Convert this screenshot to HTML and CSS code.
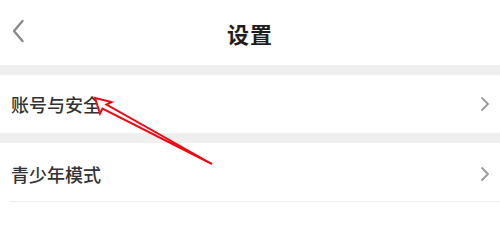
FILE: index.html
```html
<!DOCTYPE html>
<html lang="zh">
<head>
<meta charset="utf-8">
<link rel="stylesheet" href="styles.css">
</head>
<body>
<div class="page">
  <header class="topbar">
    <svg class="back" width="14" height="24" viewBox="0 0 14 24"><path d="M11.5 2 L3 12 L11.5 22" fill="none" stroke="#8a8a8a" stroke-width="2.4" stroke-linecap="round" stroke-linejoin="round"/></svg>
    <h1 class="title">设置</h1>
  </header>
  <div class="band"></div>
  <div class="row">
    <span class="label">账号与安全</span>
    <svg class="chev" width="10" height="16" viewBox="0 0 10 16"><path d="M2 2 L8 8 L2 14" fill="none" stroke="#9a9a9a" stroke-width="1.8" stroke-linecap="round" stroke-linejoin="round"/></svg>
  </div>
  <div class="band"></div>
  <div class="row row-last">
    <span class="label">青少年模式</span>
    <svg class="chev" width="10" height="16" viewBox="0 0 10 16"><path d="M2 2 L8 8 L2 14" fill="none" stroke="#9a9a9a" stroke-width="1.8" stroke-linecap="round" stroke-linejoin="round"/></svg>
  </div>
  <svg class="annot" width="500" height="214" viewBox="0 0 500 214">
    <polygon points="95,98 111.5,102 106.5,104.5 212,164 102.5,108.5 100,113.5" fill="#fff" stroke="#ee0a14" stroke-width="2" stroke-linejoin="miter"/>
  </svg>
</div>
</body>
</html>
```
FILE: styles.css
```css
html, body {
  margin: 0;
  padding: 0;
  background: #fff;
}
.page {
  position: relative;
  width: 500px;
  height: 214px;
  overflow: hidden;
  font-family: "Noto Sans CJK SC", "Noto Sans", sans-serif;
}
.topbar {
  height: 65px;
  display: flex;
  align-items: center;
  justify-content: center;
  position: relative;
}
.back {
  position: absolute;
  left: 11px;
  top: 19px;
}
.title {
  margin: 0;
  font-size: 22px;
  font-weight: 700;
  color: #1e1e1e;
  letter-spacing: 1px;
  line-height: 1;
  padding-top: 1px;
}
.band {
  height: 10px;
  background: #efefef;
}
.row {
  height: 58px;
  display: flex;
  align-items: center;
  justify-content: space-between;
  padding: 0 10px 0 11px;
  box-sizing: border-box;
}
.row-last {
  height: 59px;
  padding-top: 3px;
  margin-left: 10px;
  padding-left: 1px;
  border-bottom: 1px solid #eeeeee;
}
.label {
  font-size: 18px;
  font-weight: 500;
  color: #333;
  line-height: 1;
  letter-spacing: 0;
}
.chev {
  display: block;
}
.annot {
  position: absolute;
  left: 0;
  top: 0;
  pointer-events: none;
}
```
